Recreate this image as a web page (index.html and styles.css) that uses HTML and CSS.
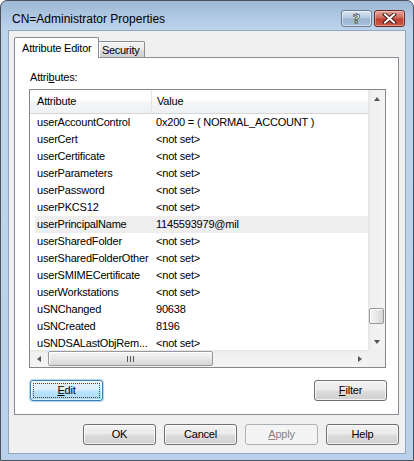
FILE: index.html
```html
<!DOCTYPE html>
<html>
<head>
<meta charset="utf-8">
<link rel="stylesheet" href="styles.css">
</head>
<body>
<div class="window">
  <div class="titlebar">
    <div class="title">CN=Administrator Properties</div>
    <div class="caption-buttons">
      <div class="cap-btn help"><span class="help-glyph">?</span></div>
      <div class="cap-btn close">
        <svg width="15" height="11" viewBox="0 0 15 11">
          <path d="M3 1.5 L12 9.5 M12 1.5 L3 9.5" stroke="#4a1a16" stroke-width="4" stroke-linecap="square" fill="none"/>
          <path d="M3 1.5 L12 9.5 M12 1.5 L3 9.5" stroke="#ffffff" stroke-width="2" stroke-linecap="square" fill="none"/>
        </svg>
      </div>
    </div>
  </div>
  <div class="client">
    <div class="tabs">
      <div class="tab active">Attribute Editor</div>
      <div class="tab">Security</div>
    </div>
    <div class="panel">
      <div class="label">Attri<u>b</u>utes:</div>
      <div class="listbox">
        <div class="list-main">
          <div class="list-view">
            <div class="header">
              <div class="hcell first">Attribute</div>
              <div class="hcell">Value</div>
            </div>
            <div class="rows">
              <div class="row"><span class="c1">userAccountControl</span><span class="c2">0x200 = ( NORMAL_ACCOUNT )</span></div>
              <div class="row"><span class="c1">userCert</span><span class="c2">&lt;not set&gt;</span></div>
              <div class="row"><span class="c1">userCertificate</span><span class="c2">&lt;not set&gt;</span></div>
              <div class="row"><span class="c1">userParameters</span><span class="c2">&lt;not set&gt;</span></div>
              <div class="row"><span class="c1">userPassword</span><span class="c2">&lt;not set&gt;</span></div>
              <div class="row"><span class="c1">userPKCS12</span><span class="c2">&lt;not set&gt;</span></div>
              <div class="row selected"><span class="c1">userPrincipalName</span><span class="c2">1145593979@mil</span></div>
              <div class="row"><span class="c1">userSharedFolder</span><span class="c2">&lt;not set&gt;</span></div>
              <div class="row"><span class="c1">userSharedFolderOther</span><span class="c2">&lt;not set&gt;</span></div>
              <div class="row"><span class="c1">userSMIMECertificate</span><span class="c2">&lt;not set&gt;</span></div>
              <div class="row"><span class="c1">userWorkstations</span><span class="c2">&lt;not set&gt;</span></div>
              <div class="row"><span class="c1">uSNChanged</span><span class="c2">90638</span></div>
              <div class="row"><span class="c1">uSNCreated</span><span class="c2">8196</span></div>
              <div class="row"><span class="c1">uSNDSALastObjRem...</span><span class="c2">&lt;not set&gt;</span></div>
            </div>
          </div>
          <div class="vscroll">
            <div class="sb-btn"><span class="arrow up"></span></div>
            <div class="vtrack">
              <div class="vthumb"></div>
            </div>
            <div class="sb-btn"><span class="arrow down"></span></div>
          </div>
        </div>
        <div class="hscroll-row">
          <div class="hscroll">
            <div class="sb-btn h"><span class="arrow left"></span></div>
            <div class="htrack">
              <div class="hthumb"><span class="grip"></span><span class="grip"></span><span class="grip"></span></div>
            </div>
            <div class="sb-btn h"><span class="arrow right"></span></div>
          </div>
          <div class="corner"></div>
        </div>
      </div>
      <div class="panel-buttons">
        <div class="btn focused"><span class="focus-rect"><u>E</u>dit</span></div>
        <div class="btn"><u>F</u>ilter</div>
      </div>
    </div>
    <div class="dialog-buttons">
      <div class="btn">OK</div>
      <div class="btn">Cancel</div>
      <div class="btn disabled"><u>A</u>pply</div>
      <div class="btn">Help</div>
    </div>
  </div>
</div>
</body>
</html>
```

FILE: styles.css
```css
* { box-sizing: border-box; }
html, body { margin: 0; padding: 0; }
body {
  width: 414px;
  height: 461px;
  overflow: hidden;
  background: #ffffff;
  font-family: "Liberation Sans", Arial, sans-serif;
  font-size: 11px;
  letter-spacing: -0.2px;
  color: #000;
}
.window {
  width: 414px;
  height: 461px;
  border: 1px solid #4a525c;
  border-radius: 7px 7px 0 0;
  background: linear-gradient(to bottom, #9db8d5 0, #b2cae4 18px, #bed4eb 30px, #b9d1ea 100%);
  display: flex;
  flex-direction: column;
}
.titlebar {
  height: 29px;
  display: flex;
  justify-content: space-between;
  align-items: flex-start;
  flex: none;
}
.title {
  font-size: 12px;
  letter-spacing: 0;
  line-height: 15px;
  padding: 11px 0 0 11px;
  color: #000;
}
.caption-buttons {
  display: flex;
  gap: 2px;
  padding: 9px 8px 0 0;
}
.cap-btn {
  width: 31px;
  height: 17px;
  border: 1px solid #6a7e98;
  border-radius: 3px;
  display: flex;
  align-items: center;
  justify-content: center;
}
.cap-btn.help {
  background: linear-gradient(to bottom, #dbe6f3 0, #b4c8df 48%, #9ab3d0 52%, #a8c0dc 100%);
  box-shadow: inset 0 0 0 1px rgba(255,255,255,0.5);
}
.help-glyph {
  font-family: "DejaVu Sans", sans-serif;
  font-weight: bold;
  font-size: 13px;
  line-height: 13px;
  color: #fff;
  -webkit-text-stroke: 0.8px #3d4f66;
}
.cap-btn.close {
  border-color: #6b2a25;
  background: linear-gradient(to bottom, #e6a79c 0, #d0685a 45%, #bf3f30 55%, #c95a48 100%);
  box-shadow: inset 0 0 0 1px rgba(255,220,210,0.45);
}
.client {
  margin: 0 7px;
  height: 424px;
  border: 1px solid #8fa6bf;
  background: #f0f0f0;
  padding: 6px 6px 0 5px;
  display: flex;
  flex-direction: column;
  flex: none;
}
.tabs {
  display: flex;
  align-items: flex-end;
  height: 20px;
  position: relative;
  z-index: 1;
}
.tab {
  border: 1px solid #898c95;
  border-bottom: none;
  line-height: 14px;
  white-space: nowrap;
}
.tab.active {
  width: 85px;
  height: 21px;
  margin-bottom: -1px;
  background: #ffffff;
  padding: 3px 0 0 7px;
  border-radius: 2px 2px 0 0;
}
.tab:not(.active) {
  width: 47px;
  height: 16px;
  margin-left: -1px;
  background: linear-gradient(to bottom, #f2f2f2 0, #ebebeb 50%, #dddddd 51%, #cfcfcf 100%);
  box-shadow: inset 1px 1px 0 #ffffff;
  padding: 1px 0 0 3px;
  letter-spacing: -0.3px;
  border-radius: 2px 2px 0 0;
}
.panel {
  width: 385px;
  height: 358px;
  border: 1px solid #898c95;
  background: #ffffff;
  padding: 0 0 0 14px;
  display: flex;
  flex-direction: column;
}
.label {
  margin-top: 13px;
  line-height: 13px;
  padding-left: 1px;
}
.listbox {
  margin-top: 5px;
  width: 357px;
  height: 279px;
  border: 1px solid #828790;
  display: flex;
  flex-direction: column;
  background: #fff;
}
.list-main {
  display: flex;
  height: 260px;
}
.list-view {
  width: 338px;
  overflow: hidden;
}
.header {
  display: grid;
  grid-template-columns: 122px 1fr;
  height: 24px;
  border-bottom: 1px solid #d5d5d5;
  background: linear-gradient(to bottom, #ffffff 0, #ffffff 45%, #f4f5f7 55%, #eef0f3 100%);
}
.hcell {
  line-height: 23px;
  padding-left: 5px;
}
.hcell.first {
  padding-left: 7px;
  border-right: 1px solid #e3e5e8;
}
.rows {
  padding-left: 5px;
}
.row {
  display: grid;
  grid-template-columns: 116px 1fr;
  height: 17px;
  line-height: 17px;
  white-space: nowrap;
}
.row.selected {
  background: #eeeeee;
}
.c1 { padding-left: 2px; overflow: hidden; }
.c2 { padding-left: 5px; overflow: hidden; }
.vscroll {
  width: 17px;
  display: flex;
  flex-direction: column;
  background: linear-gradient(to right, #e4e4e4 0, #f0f0f0 3px, #f4f4f4 100%);
}
.sb-btn {
  width: 17px;
  height: 17px;
  display: flex;
  align-items: center;
  justify-content: center;
  flex: none;
}
.vtrack {
  flex: 1;
  display: flex;
  flex-direction: column;
  justify-content: flex-end;
  padding-bottom: 9px;
}
.vthumb {
  margin-left: 1px;
  width: 15px;
  height: 16px;
  border: 1px solid #999999;
  border-radius: 2px;
  background: linear-gradient(to right, #f5f5f5 0, #e8e8e8 50%, #d6d6d6 100%);
  box-shadow: inset 1px 1px 0 #ffffff;
}
.arrow {
  width: 0;
  height: 0;
  border-style: solid;
}
.arrow.up { border-width: 0 3.5px 4px 3.5px; border-color: transparent transparent #555 transparent; }
.arrow.down { border-width: 4px 3.5px 0 3.5px; border-color: #555 transparent transparent transparent; }
.arrow.left { border-width: 3.5px 4px 3.5px 0; border-color: transparent #555 transparent transparent; }
.arrow.right { border-width: 3.5px 0 3.5px 4px; border-color: transparent transparent transparent #555; }
.hscroll-row {
  display: flex;
  height: 17px;
}
.hscroll {
  width: 338px;
  display: flex;
  background: linear-gradient(to bottom, #e4e4e4 0, #f0f0f0 3px, #f4f4f4 100%);
}
.htrack {
  flex: 1;
  display: flex;
  align-items: center;
  padding-left: 1px;
}
.hthumb {
  width: 165px;
  height: 15px;
  border: 1px solid #999999;
  border-radius: 2px;
  background: linear-gradient(to bottom, #f5f5f5 0, #e8e8e8 50%, #d6d6d6 100%);
  box-shadow: inset 1px 1px 0 #ffffff;
  display: flex;
  justify-content: center;
  align-items: center;
  gap: 2px;
}
.grip {
  width: 1px;
  height: 6px;
  background: #555;
}
.corner {
  width: 17px;
  background: #f0f0f0;
}
.panel-buttons {
  display: flex;
  justify-content: space-between;
  width: 358px;
  margin-top: 12px;
  padding-left: 1px;
}
.btn {
  width: 73px;
  height: 21px;
  border: 1px solid #707070;
  border-radius: 3px;
  background: linear-gradient(to bottom, #f2f2f2 0, #ebebeb 48%, #dddddd 52%, #cfcfcf 100%);
  box-shadow: inset 0 0 0 1px rgba(255,255,255,0.75);
  display: flex;
  align-items: center;
  justify-content: center;
  line-height: 13px;
}
.btn.focused {
  border-color: #3c7fb1;
  background: linear-gradient(to bottom, #eaf6fd 0, #d9f0fc 48%, #bee6fd 52%, #a7d9f5 100%);
  box-shadow: 0 0 1px 1px rgba(96,170,220,0.5), inset 0 0 0 1px rgba(255,255,255,0.6);
}
.focus-rect {
  width: 67px;
  height: 15px;
  border: 1px dotted #5a3a2a;
  display: flex;
  align-items: center;
  justify-content: center;
}
.btn.disabled {
  border-color: #adb2b5;
  background: #f4f4f4;
  color: #838383;
  box-shadow: none;
}
.dialog-buttons {
  display: flex;
  justify-content: flex-end;
  gap: 8px;
  margin-top: 9px;
}
```
